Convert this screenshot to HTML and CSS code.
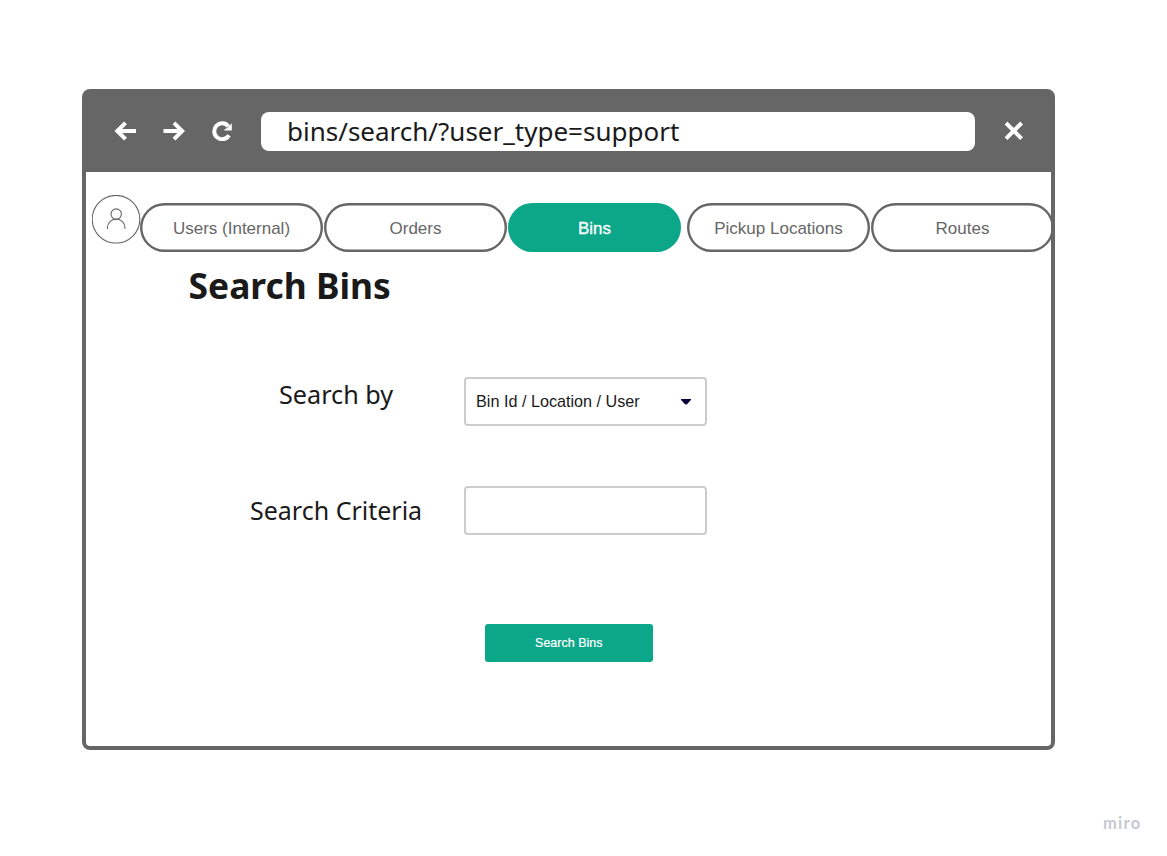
FILE: index.html
```html
<!DOCTYPE html>
<html lang="en">
<head>
<meta charset="utf-8">
<title>Search Bins</title>
<link rel="stylesheet" href="styles.css">
</head>
<body>
<div class="window">
  <header class="toolbar">
    <svg class="icon back" width="22" height="20" viewBox="0 0 22 20"><path d="M11.5 1.8 3.3 10l8.2 8.2M3.5 10h19"/></svg>
    <svg class="icon forward" width="22" height="20" viewBox="0 0 22 20"><path d="M11 1.8 19.2 10 11 18.2M19 10H.5"/></svg>
    <svg class="icon reload" width="21" height="20" viewBox="0 0 21 20"><path d="M16.4 5.4A7.9 7.9 0 1 0 17 14.2"/><path class="solid" d="M19.8 2.3V9.6H12.5V8.2L15.4 7z"/></svg>
    <div class="address">bins/search/?user_type=support</div>
    <svg class="icon close" width="20" height="20" viewBox="0 0 20 20"><path d="M2 2 17.6 17.6M17.6 2 2 17.6"/></svg>
  </header>
  <main class="page">
    <nav class="nav">
      <svg class="avatar" width="49" height="49" viewBox="0 0 49 49"><circle cx="24" cy="24.2" r="23.8"/><circle cx="24.2" cy="19.1" r="5.2"/><path d="M15.4 34v-1.1a8.8 8.8 0 0 1 17.6 0v1.1"/></svg>
      <a class="pill">Users (Internal)</a>
      <a class="pill">Orders</a>
      <a class="pill active">Bins</a>
      <a class="pill">Pickup Locations</a>
      <a class="pill">Routes</a>
    </nav>
    <h1 class="title">Search Bins</h1>
    <form class="form">
      <div class="row">
        <span class="label label-by">Search by</span>
        <div class="field"><span class="value">Bin Id / Location / User</span><svg class="caret" width="10" height="6" viewBox="0 0 10 6"><path d="M.5 0h9a.5.5 0 0 1 .4.9L6.2 5.1q-1.2 1-2.4 0L.1.9A.5.5 0 0 1 .5 0z"/></svg></div>
      </div>
      <div class="row">
        <span class="label label-criteria">Search Criteria</span>
        <div class="field"></div>
      </div>
      <div class="submit">Search Bins</div>
    </form>
  </main>
</div>
<footer class="brand">miro</footer>
</body>
</html>
```
FILE: styles.css
```css
* { box-sizing: border-box; }
body {
  margin: 0;
  height: 856px;
  padding: 88.5px 0 0 82px;
  overflow: hidden;
  background: #fff;
  color: #1a1a1a;
  font-family: "Liberation Sans", Arial, sans-serif;
}
.window {
  width: 973px;
  height: 661px;
  border: 4px solid #666;
  border-radius: 8px;
  background: #666;
}
.toolbar {
  display: flex;
  align-items: center;
  height: 79.5px;
  padding: 0 27.5px 2px 28px;
}
.icon { flex: none; fill: none; stroke: #fff; stroke-width: 4; }
.icon .solid { fill: #fff; stroke: none; }
.forward { margin-left: 27px; }
.reload { margin-left: 27px; }
.address {
  flex: 1;
  height: 39px;
  margin: 0 28.5px 0 28px;
  padding-left: 26px;
  border-radius: 8px;
  background: #fff;
  font: 26px/39px "Noto Sans", "Open Sans", sans-serif;
}
.page { height: 573.5px; border-radius: 0 0 4px 4px; background: #fff; }
.nav { display: flex; width: 968px; padding: 22.5px 0 0 6px; }
.avatar { flex: none; fill: none; stroke: #666; stroke-width: 1.1; }
.pill {
  flex: none;
  width: 183px;
  height: 48.5px;
  margin: 8.5px 1px 0 0;
  border-radius: 25px;
  box-shadow: inset 0 0 0 2.4px #666;
  color: #666;
  font-size: 17px;
  line-height: 51px;
  text-align: center;
}
.avatar + .pill { margin-left: -1px; }
.pill.active {
  width: 173px;
  margin-right: 6px;
  background: #0ca789;
  box-shadow: none;
  color: #fff;
  -webkit-text-stroke: .3px #fff;
}
.title {
  margin: 8px 0 0 102.5px;
  font: 700 35.4px/50px "Noto Sans", "Open Sans", sans-serif;
}
.form { padding-top: 67px; }
.row {
  display: flex;
  height: 49px;
  margin-bottom: 60px;
}
.label { width: 214px; margin-left: 164px; font: 25px/36px "Noto Sans", "Open Sans", sans-serif; }
.label-by { width: 185px; margin: -1px 0 0 193px; font-size: 25.2px; }
.label-criteria { padding-top: 6px; }
.field {
  display: flex;
  align-items: center;
  justify-content: space-between;
  width: 243px;
  height: 49px;
  padding: 2px 14px 0 10px;
  border: 2px solid #ccc;
  border-radius: 4px;
  font-size: 16.2px;
}
.value { padding-bottom: 2px; }
.caret { fill: #050038; }
.submit {
  width: 167.5px;
  height: 37.5px;
  margin: 89.5px 0 0 399px;
  border-radius: 3px;
  background: #0ca789;
  color: #fff;
  font-size: 12.5px;
  line-height: 38px;
  text-align: center;
  -webkit-text-stroke: .2px #fff;
}
.brand {
  margin: 62px 0 0 1021px;
  color: #c8c8d4;
  font: 700 16.5px/22px Lato, sans-serif;
  letter-spacing: 1.3px;
}
```
